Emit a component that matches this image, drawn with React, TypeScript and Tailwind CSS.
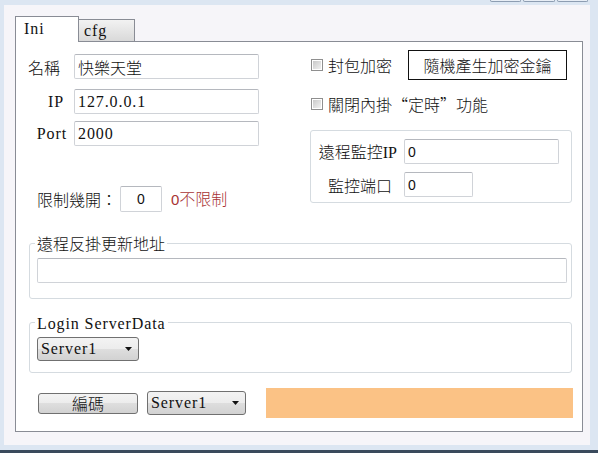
import React from "react";

const CJK = "font-['Noto_Sans_CJK_TC',sans-serif] font-light";
const LAT =
  "font-['Liberation_Serif','Noto_Sans_CJK_TC',serif] font-normal text-[16px] tracking-[0.9px]";
const SANS = "font-['Liberation_Sans','Noto_Sans_CJK_TC',sans-serif]";
const BTN_BG =
  "bg-[linear-gradient(#f3f3f3_0%,#ececec_50%,#dedede_50%,#d2d2d2_100%)]";

function Field({
  className = "",
  children,
}: {
  className?: string;
  children?: React.ReactNode;
}) {
  return (
    <div
      className={`flex items-center bg-white border border-[#d0d3d8] border-t-[#b5b8be] rounded-[2px] px-[3px] ${className}`}
    >
      {children}
    </div>
  );
}

function Check() {
  return (
    <span className="flex items-center justify-center w-[12px] h-[12px] border border-[#8f8f8f] bg-white shrink-0">
      <span className="w-[8px] h-[8px] bg-[linear-gradient(135deg,#c9c9c9,#f1f1f1)]" />
    </span>
  );
}

function Combo({ className = "" }: { className?: string }) {
  return (
    <div
      className={`flex items-center justify-between border border-[#707070] rounded-[3px] ${BTN_BG} pl-[3px] pr-[6px] ${className}`}
    >
      <span className={`${LAT} leading-[18px] text-[#111]`}>Server1</span>
      <svg width="7" height="4" viewBox="0 0 7 4">
        <path d="M0 0H7L3.5 4Z" fill="#111" />
      </svg>
    </div>
  );
}

function Group({
  title,
  className = "",
  bodyClassName = "",
  children,
}: {
  title: React.ReactNode;
  className?: string;
  bodyClassName?: string;
  children?: React.ReactNode;
}) {
  return (
    <fieldset className={`border border-[#d5dbe0] rounded-[3px] ${className}`}>
      <legend className="ml-[5px] px-[2px] h-[20px] leading-[20px] text-[#111]">
        {title}
      </legend>
      <div className={bodyClassName}>{children}</div>
    </fieldset>
  );
}

export default function App() {
  return (
    <div className="w-[598px] h-[453px] bg-[#dce6f2] flex flex-col overflow-hidden">
      {/* caption strip with the lower edges of the window buttons */}
      <div className="h-[5px] shrink-0 flex justify-end items-start pr-[10px] gap-[2px]">
        <div className="w-[31px] h-[2px] border border-t-0 border-[#8d9db2] rounded-b-[3px] bg-[#e8eef6]" />
        <div className="w-[32px] h-[2px] border border-t-0 border-[#8d9db2] rounded-b-[3px] bg-[#e8eef6]" />
        <div className="w-[31px] h-[2px] border border-t-0 border-[#8d9db2] rounded-b-[3px] bg-[#e8eef6]" />
      </div>

      <div className="flex-1 flex pl-[4px] pr-[8px] min-h-0">
        <div className="flex-1 bg-[#f6f5f9] pt-[11px] pl-[11px] pr-[7px] flex flex-col">
          {/* tab strip */}
          <div className="h-[25px] flex items-end shrink-0">
            <div
              className={`relative z-10 w-[64px] h-[26px] -mb-px bg-white border border-b-0 border-[#898c95] pl-[8px] pt-[2px] ${LAT} leading-[20px] text-[#111]`}
            >
              Ini
            </div>
            <div
              className={`w-[56px] h-[22px] border border-l-0 border-b-0 border-[#898c95] bg-[linear-gradient(#f2f2f2,#d9d9d9)] pl-[5px] ${LAT} leading-[22px] text-[#111]`}
            >
              cfg
            </div>
          </div>

          {/* tab page */}
          <div
            className={`w-[568px] h-[391px] bg-white border border-[#898c95] flex flex-col ${CJK} text-[16px] text-[#111]`}
          >
            <div className="flex">
              {/* left column */}
              <div className="w-[294px] pt-[12px] flex flex-col">
                <div className="flex items-center h-[25px]">
                  <div className="w-[51px] text-right pr-[7px] leading-[20px]">
                    名稱
                  </div>
                  <Field className="ml-[7px] w-[185px] h-[25px]">
                    <span className="leading-[20px]">快樂天堂</span>
                  </Field>
                </div>
                <div className="flex items-center h-[25px] mt-[10px]">
                  <div className={`w-[51px] text-right pr-[3px] ${LAT} leading-[20px]`}>
                    IP
                  </div>
                  <Field className="ml-[7px] w-[185px] h-[25px]">
                    <span className={`${LAT} leading-[18px]`}>127.0.0.1</span>
                  </Field>
                </div>
                <div className="flex items-center h-[25px] mt-[7px]">
                  <div className={`w-[51px] text-right ${LAT} leading-[20px]`}>
                    Port
                  </div>
                  <Field className="ml-[7px] w-[185px] h-[25px]">
                    <span className={`${LAT} leading-[18px]`}>2000</span>
                  </Field>
                </div>
                <div className="flex items-center h-[26px] mt-[40px] pl-[21px]">
                  <span className="leading-[20px]">限制幾開：</span>
                  <Field className="ml-[3px] w-[42px] h-[26px] justify-center">
                    <span className={`${SANS} text-[14px] leading-[18px]`}>0</span>
                  </Field>
                  <span className="ml-[9px] leading-[20px] text-[#a83434]">
                    <span className={`${SANS} text-[15px]`}>0</span>不限制
                  </span>
                </div>
              </div>

              {/* right column */}
              <div className="w-[262px] pt-[8px] flex flex-col">
                <div className="flex items-center h-[30px]">
                  <div className="pl-[1px]">
                    <Check />
                  </div>
                  <span className="ml-[5px] leading-[20px]">封包加密</span>
                  <button className="ml-[16px] w-[159px] h-[30px] border border-[#111] bg-white leading-[20px] text-[16px] text-[#111]">
                    隨機產生加密金鑰
                  </button>
                </div>
                <div className="flex items-center h-[20px] mt-[14px]">
                  <div className="pl-[1px]">
                    <Check />
                  </div>
                  <span className="ml-[5px] leading-[20px] whitespace-nowrap">
                    關閉內掛
                    <span className="inline-block w-[16px] text-right">“</span>
                    定時
                    <span className="inline-block w-[16px] text-left">”</span>
                    功能
                  </span>
                </div>
                <div className="mt-[16px] h-[73px] border border-[#d5dbe0] rounded-[3px] pt-[8px] flex flex-col">
                  <div className="flex items-center h-[25px]">
                    <div className="w-[88px] text-right pr-[2px] leading-[20px] whitespace-nowrap">
                      遠程監控
                      <span className={`${LAT} tracking-[0px]`}>IP</span>
                    </div>
                    <Field className="ml-[5px] w-[155px] h-[25px]">
                      <span className={`${SANS} text-[14px] leading-[18px]`}>0</span>
                    </Field>
                  </div>
                  <div className="flex items-center h-[25px] mt-[8px]">
                    <div className="w-[88px] text-right pr-[7px] leading-[20px]">
                      監控端口
                    </div>
                    <Field className="ml-[5px] w-[69px] h-[25px]">
                      <span className={`${SANS} text-[14px] leading-[18px]`}>0</span>
                    </Field>
                  </div>
                </div>
              </div>
            </div>

            <Group
              title="遠程反掛更新地址"
              className="mt-[21px] ml-[13px] mr-[10px] h-[66px]"
              bodyClassName="pt-[5px] pl-[7px] pr-[4px]"
            >
              <Field className="w-full h-[25px]" />
            </Group>

            <Group
              title={<span className={`${LAT} leading-[20px]`}>Login ServerData</span>}
              className="mt-[13px] ml-[13px] mr-[10px] h-[61px]"
              bodyClassName="pt-[5px] pl-[7px]"
            >
              <Combo className="w-[102px] h-[24px]" />
            </Group>

            <div className="mt-[15px] h-[30px] flex items-center pl-[22px]">
              <button
                className={`w-[100px] h-[21px] border border-[#707070] rounded-[3px] ${BTN_BG} leading-[19px] text-[16px] text-[#111]`}
              >
                編碼
              </button>
              <Combo className="ml-[9px] w-[99px] h-[24px]" />
              <div className="ml-[20px] w-[307px] h-[30px] bg-[#fbc285]" />
            </div>
          </div>
        </div>
      </div>

      <div className="h-[5px] shrink-0" />
      <div className="h-[3px] shrink-0 bg-[#3a4a5c]" />
    </div>
  );
}
